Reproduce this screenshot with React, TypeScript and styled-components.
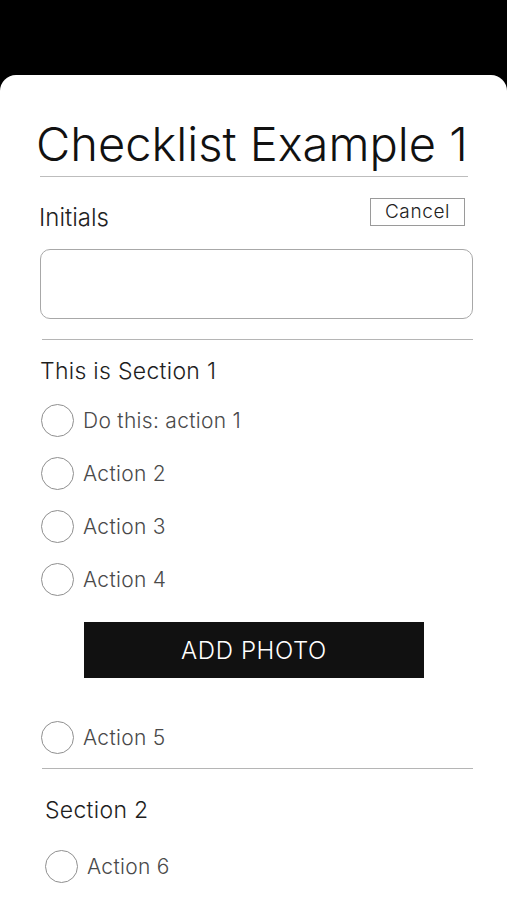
import { createGlobalStyle } from "styled-components";
import styled from "styled-components";

const GlobalStyle = createGlobalStyle`
  html, body {
    margin: 0;
    padding: 0;
    background: #000;
  }
  body {
    font-family: Inter, "Noto Sans", "Liberation Sans", sans-serif;
  }
`;

interface ActionItem {
  label: string;
}

const sectionOne: ActionItem[] = [
  { label: "Do this: action 1" },
  { label: "Action 2" },
  { label: "Action 3" },
  { label: "Action 4" },
];

function ActionRow({ label }: ActionItem) {
  return (
    <Row>
      <Radio />
      <RowLabel>{label}</RowLabel>
    </Row>
  );
}

export default function App() {
  return (
    <Page>
      <GlobalStyle />
      <Sheet>
        <Title>Checklist Example 1</Title>
        <InitialsRow>
          <FieldLabel>Initials</FieldLabel>
          <CancelButton>Cancel</CancelButton>
        </InitialsRow>
        <InitialsInput />
        <Divider />
        <SectionTitle>This is Section 1</SectionTitle>
        <List>
          {sectionOne.map((item) => (
            <ActionRow key={item.label} label={item.label} />
          ))}
        </List>
        <PhotoButton>ADD PHOTO</PhotoButton>
        <List $top={33}>
          <ActionRow label="Action 5" />
        </List>
        <Divider $top={4} />
        <SectionTitle $top={26} $indent={5}>
          Section 2
        </SectionTitle>
        <List $top={15} $indent={4}>
          <ActionRow label="Action 6" />
        </List>
      </Sheet>
    </Page>
  );
}

const Page = styled("div")`
  min-height: 900px;
  padding-top: 75px;
  box-sizing: border-box;
  display: flex;
  flex-direction: column;
`;

const Sheet = styled("div")`
  flex: 1;
  background: #fff;
  border-radius: 16px 16px 0 0;
  padding: 0 34px 0 40px;
  display: flex;
  flex-direction: column;
`;

const Title = styled("h1")`
  margin: 41px 5px 0 0;
  padding: 0 0 4px 0;
  font-size: 47px;
  line-height: 56px;
  font-weight: 300;
  color: #111;
  border-bottom: 1px solid #bdbdbd;
  text-indent: -4px;
  white-space: nowrap;
`;

const InitialsRow = styled("div")`
  margin-top: 21px;
  height: 28px;
  display: flex;
  justify-content: space-between;
  align-items: flex-start;
  padding-right: 8px;
`;

const FieldLabel = styled("div")`
  margin-top: 5px;
  margin-left: -1px;
  font-size: 24px;
  line-height: 30px;
  font-weight: 300;
  color: #222;
`;

const CancelButton = styled("button")`
  height: 28px;
  width: 95px;
  padding: 0;
  border: 1px solid #9a9a9a;
  background: #fff;
  font-family: inherit;
  font-size: 19px;
  font-weight: 300;
  letter-spacing: 0.6px;
  color: #222;
  line-height: 24px;
`;

const InitialsInput = styled("input")`
  margin-top: 23px;
  height: 70px;
  box-sizing: border-box;
  border: 1px solid #a8a8a8;
  border-radius: 10px;
  font-family: inherit;
  font-size: 20px;
  padding: 0 14px;
  outline: none;
`;

const Divider = styled("div")<{ $top?: number }>`
  margin-top: ${(p) => p.$top ?? 20}px;
  margin-left: 2px;
  height: 1px;
  background: #b5b5b5;
`;

const SectionTitle = styled("div")<{ $top?: number; $indent?: number }>`
  margin-top: ${(p) => p.$top ?? 16}px;
  margin-left: ${(p) => p.$indent ?? 0}px;
  font-size: 23px;
  line-height: 30px;
  font-weight: 300;
  letter-spacing: 0.3px;
  color: #1e1e1e;
`;

const List = styled("div")<{ $top?: number; $indent?: number }>`
  margin-top: ${(p) => p.$top ?? 8}px;
  margin-left: ${(p) => (p.$indent ?? 0) + 1}px;
  display: flex;
  flex-direction: column;
`;

const Row = styled("div")`
  height: 53px;
  display: flex;
  align-items: center;
  gap: 9px;
`;

const Radio = styled("span")`
  width: 33px;
  height: 33px;
  box-sizing: border-box;
  border: 1.5px solid #8f8f8f;
  border-radius: 50%;
  flex: none;
`;

const RowLabel = styled("span")`
  font-size: 21px;
  font-weight: 300;
  letter-spacing: 0.3px;
  color: #4a4a4a;
`;

const PhotoButton = styled("button")`
  margin: 16px 0 0 44px;
  width: 340px;
  height: 56px;
  border: none;
  background: #111;
  color: #fff;
  font-family: inherit;
  font-size: 24px;
  font-weight: 300;
  letter-spacing: 0.6px;
`;
